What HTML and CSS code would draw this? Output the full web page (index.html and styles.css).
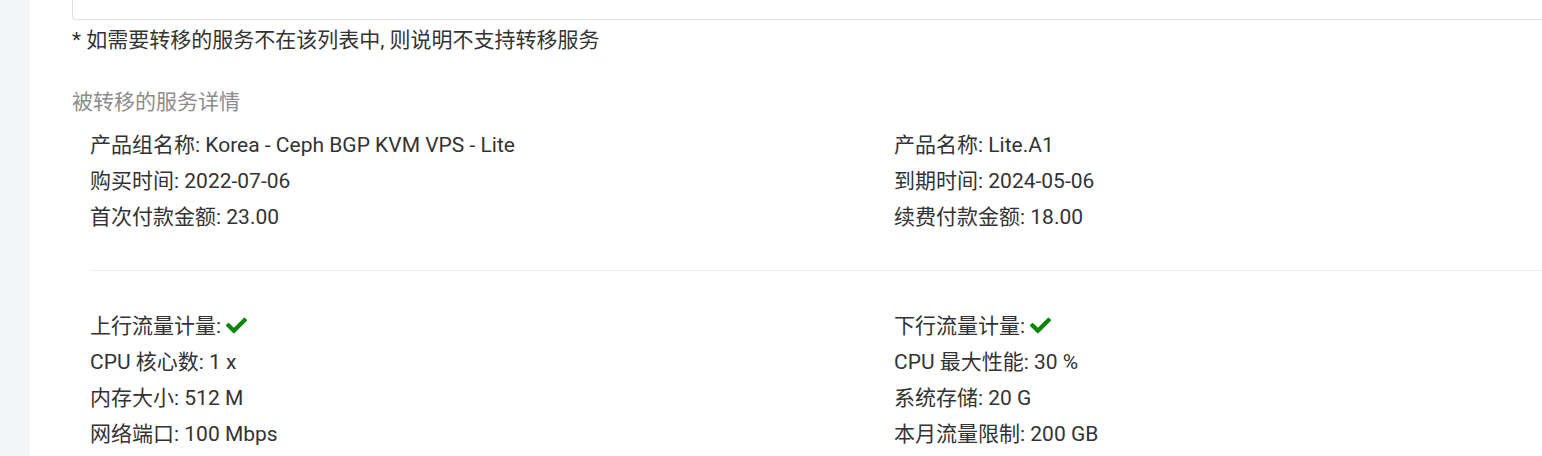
FILE: index.html
```html
<!DOCTYPE html>
<html lang="zh-CN">
<head>
	<meta charset="UTF-8">
	<title>服务转移</title>
	<link rel="stylesheet" href="styles.css">
</head>
<body>
	<div class="layout">
		<div class="side"></div>
		<div class="main">
			<div class="select-box"></div>
			<p class="note">* 如需要转移的服务不在该列表中, 则说明不支持转移服务</p>

			<h4 class="sub-tit">被转移的服务详情</h4>
			<div class="detail">
				<ul class="grid">
					<li>产品组名称: Korea - Ceph BGP KVM VPS - Lite</li>
					<li>产品名称: Lite.A1</li>
					<li>购买时间: 2022-07-06</li>
					<li>到期时间: 2024-05-06</li>
					<li>首次付款金额: 23.00</li>
					<li>续费付款金额: 18.00</li>
				</ul>
				<hr class="line">
				<ul class="grid">
					<li>上行流量计量: <svg class="ok" viewBox="0 0 512 512"><path d="M173.9 439.4l-166.4-166.4c-10-10-10-26.2 0-36.2l36.2-36.2c10-10 26.2-10 36.2 0L192 312.7 432.1 72.6c10-10 26.2-10 36.2 0l36.2 36.2c10 10 10 26.2 0 36.2l-294.4 294.4c-10 10-26.2 10-36.2 0z"/></svg></li>
					<li>下行流量计量: <svg class="ok" viewBox="0 0 512 512"><path d="M173.9 439.4l-166.4-166.4c-10-10-10-26.2 0-36.2l36.2-36.2c10-10 26.2-10 36.2 0L192 312.7 432.1 72.6c10-10 26.2-10 36.2 0l36.2 36.2c10 10 10 26.2 0 36.2l-294.4 294.4c-10 10-26.2 10-36.2 0z"/></svg></li>
					<li>CPU 核心数: 1 x</li>
					<li>CPU 最大性能: 30 %</li>
					<li>内存大小: 512 M</li>
					<li>系统存储: 20 G</li>
					<li>网络端口: 100 Mbps</li>
					<li>本月流量限制: 200 GB</li>
				</ul>
			</div>
		</div>
	</div>
</body>
</html>
```
FILE: styles.css
```css
html, body{ margin: 0; padding: 0; overflow: hidden; background: #fff;}
body{ font-family: Roboto, "Noto Sans CJK SC", sans-serif; color: #333; font-size: 21px;}
.layout{ display: flex; min-height: 456px;}
.side{ flex: 0 0 30px; background: #f4f5f7;}
.main{ flex: 0 0 1700px; padding-left: 42px;}
.select-box{ margin-top: -30px; height: 49px; border: 1px solid #dcdfe6; border-top: 0; border-radius: 0 0 4px 4px;}
.note{ margin: 6px 0 0; line-height: 28px;}
.sub-tit{ margin: 34px 0 0; line-height: 28px; font-size: 21px; font-weight: normal; color: #8c8c8c;}
.detail{ padding: 0 0 0 18px;}
.grid{ display: grid; grid-template-columns: 804px 804px; margin: 0; padding: 0; list-style: none;}
.grid li{ line-height: 36px; height: 36px;}
.detail .grid:first-child{ margin-top: 11px;}
.line{ margin: 35px 0 37px; border: 0; border-top: 1px solid #efefef;}
.ok{ width: 21px; height: 21px; fill: #0a870a; vertical-align: -3px;}
```
